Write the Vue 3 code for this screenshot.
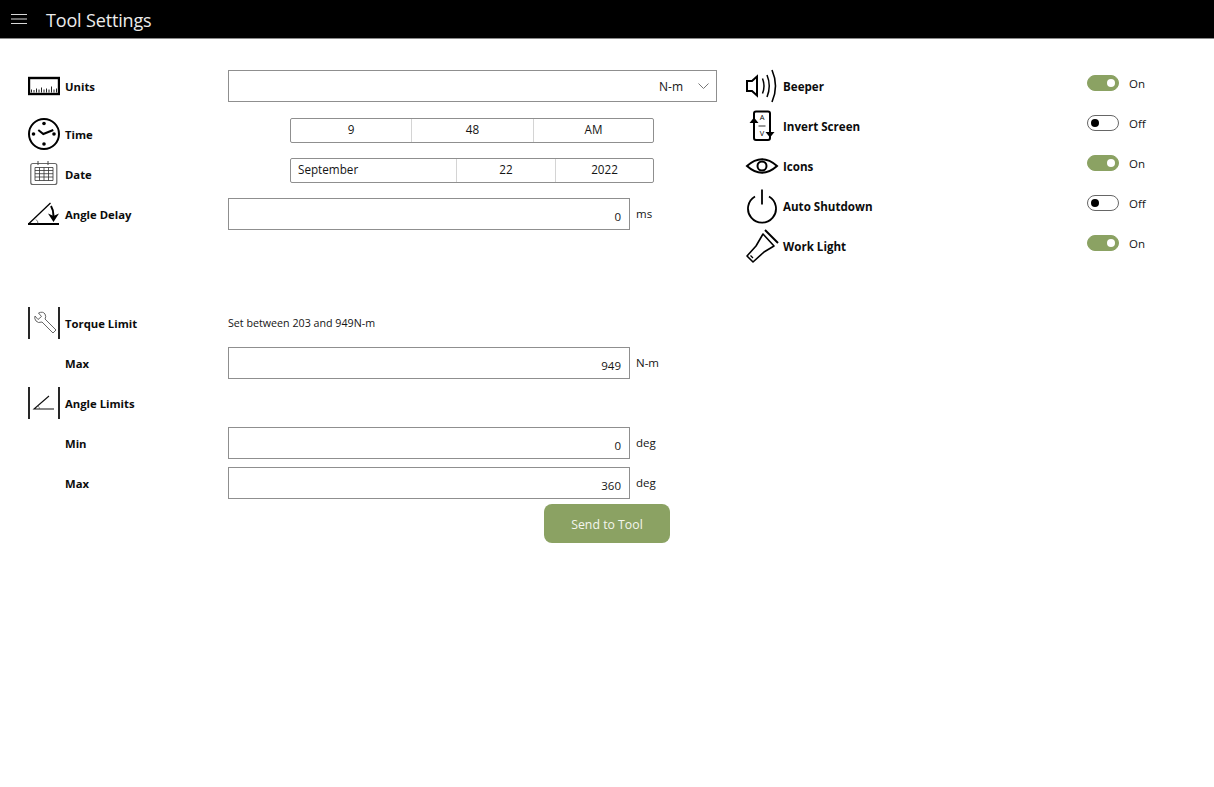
<script setup>
const toggles = [
  { name: 'Beeper', on: true, icon: 'beeper' },
  { name: 'Invert Screen', on: false, icon: 'invert' },
  { name: 'Icons', on: true, icon: 'eye' },
  { name: 'Auto Shutdown', on: false, icon: 'power' },
  { name: 'Work Light', on: true, icon: 'light' },
]
</script>

<template>
  <div class="page">
    <header class="bar">
      <svg class="burger" width="16" height="10" viewBox="0 0 16 10"><path d="M0 .5h16M0 5h16M0 9.5h16" stroke="#d8d8d8" fill="none" /></svg>
      <h1>Tool Settings</h1>
    </header>
    <main class="main">
      <section class="left">
        <div class="row mb4">
          <div class="label">
            <svg class="icon" width="32" height="32" viewBox="0 0 32 32">
              <rect x="1" y="8" width="30" height="16" fill="none" stroke="#000" stroke-width="2.400" />
              <path d="M3.500 22.500v-3M6 22.500v-2.500M8.500 22.500v-4M11 22.500v-3M13.500 22.500v-5M16 22.500v-3M18.500 22.500v-4M21 22.500v-3M23.500 22.500v-6M26 22.500v-3M28.500 22.500v-4" stroke="#222" stroke-width="1" />
            </svg>
            <span>Units</span>
          </div>
          <div class="box select"><span>N-m</span>
            <svg width="11" height="6" viewBox="0 0 11 6"><path d="M.5.5l5 5 5-5" fill="none" stroke="#777" /></svg>
          </div>
        </div>
        <div class="row">
          <div class="label low">
            <svg class="icon" width="32" height="32" viewBox="0 0 32 32">
              <circle cx="16" cy="16" r="15" fill="none" stroke="#000" stroke-width="2" />
              <circle cx="16" cy="5.500" r="1.800" /><circle cx="16" cy="26" r="1.800" /><circle cx="5.500" cy="16" r="1.800" /><circle cx="26" cy="16" r="1.800" />
              <path d="M10.300 12l5 4 10-4" fill="none" stroke="#000" stroke-width="2" />
            </svg>
            <span>Time</span>
          </div>
          <div class="seg seg-time"><div>9</div><div>48</div><div>AM</div></div>
        </div>
        <div class="row mb4">
          <div class="label low">
            <svg class="icon" width="32" height="32" viewBox="0 0 32 32">
              <rect x="2.800" y="5.500" width="26" height="21" rx="2" fill="none" stroke="#666" stroke-width="1.200" />
              <path d="M10 3v4M20 3v4" stroke="#444" />
              <path d="M7 9.500h18v13H7zM7 12.500h18M7 15.700h18M7 19h18M11.500 9.500v13M16 9.500v13M20.500 9.500v13" fill="none" stroke="#333" stroke-width=".8" />
            </svg>
            <span>Date</span>
          </div>
          <div class="seg seg-date"><div class="start">September</div><div>22</div><div>2022</div></div>
        </div>
        <div class="row gap-after">
          <div class="label">
            <svg class="icon" width="32" height="32" viewBox="0 0 32 32">
              <path d="M0 26h31" stroke="#000" stroke-width="2" />
              <path d="M1 25.500L22.500 5" stroke="#000" stroke-width="1.300" fill="none" />
              <path d="M8 21.500q2 1.500 2 4" fill="none" stroke="#333" stroke-width=".7" />
              <path d="M23 8q2.500 4 2.500 10" fill="none" stroke="#000" stroke-width="2" />
              <path d="M20 15.500l5.500 2.500 5.500-2.500L25.500 24z" />
            </svg>
            <span>Angle Delay</span>
          </div>
          <div class="box input">0</div><span class="unit">ms</span>
        </div>

        <div class="row">
          <div class="label">
            <svg class="icon" width="32" height="32" viewBox="0 0 32 32">
              <path d="M1 0v32M31 0v32" stroke="#111" stroke-width="1.800" />
              <path d="M7 9l3 3.500 3.500-3L10.500 6q4.500-2 6.500 1 1.500 3 0 5l11 11-3 3-11-11q-4 1.500-6-1-2-2.500-1-5z" fill="none" stroke="#555" stroke-width=".9" />
            </svg>
            <span>Torque Limit</span>
          </div>
          <span class="hint">Set between 203 and 949N-m</span>
        </div>
        <div class="row">
          <div class="label"><span class="indent">Max</span></div>
          <div class="box input">949</div><span class="unit">N-m</span>
        </div>
        <div class="row">
          <div class="label">
            <svg class="icon" width="32" height="32" viewBox="0 0 32 32">
              <path d="M1 0v32M31 0v32" stroke="#111" stroke-width="1.800" />
              <path d="M26 22H6l15-13" fill="none" stroke="#111" stroke-width="1.100" />
              <path d="M10 19q1.500 1 1.500 3" fill="none" stroke="#444" stroke-width=".6" />
            </svg>
            <span>Angle Limits</span>
          </div>
        </div>
        <div class="row">
          <div class="label"><span class="indent">Min</span></div>
          <div class="box input">0</div><span class="unit">deg</span>
        </div>
        <div class="row">
          <div class="label"><span class="indent">Max</span></div>
          <div class="box input">360</div><span class="unit">deg</span>
        </div>
        <div class="actions"><button class="send" type="button">Send to Tool</button></div>
      </section>

      <section class="right">
        <div v-for="t in toggles" :key="t.name" class="trow">
          <svg class="ricon" width="34" height="34" viewBox="0 0 34 34">
            <g v-if="t.icon === 'beeper'" fill="none" stroke="#000">
              <path d="M2 12h5l5-4.500v19L7 22H2z" stroke-width="2" />
              <path d="M17.500 9.500q3 7.500 0 15" stroke-width="1.500" />
              <path d="M22 6q4.500 11 0 22" stroke-width="1.500" />
              <path d="M27 1q7 16 0 32" stroke-width="1.600" />
            </g>
            <g v-else-if="t.icon === 'invert'">
              <path d="M9 10V4.500q0-2 2-2h12q2 0 2 2V25M9 14v15q0 2 2 2h12q2 0 2-2v-2" fill="none" stroke="#000" stroke-width="2" />
              <path d="M4.500 14L9 8.500l4.500 5.500zM20.500 23h9L25 28.500z" />
              <text x="17" y="11" class="tiny">A</text>
              <path d="M13.500 17h7" stroke="#333" stroke-width="1" />
              <text x="17" y="27" class="tiny">V</text>
            </g>
            <g v-else-if="t.icon === 'eye'" fill="none" stroke="#000">
              <path d="M2 17Q17 3.500 32 17 17 30.500 2 17z" stroke-width="2" />
              <circle cx="17" cy="17" r="4.500" stroke-width="2" />
            </g>
            <g v-else-if="t.icon === 'power'" fill="none" stroke="#000" stroke-width="1.800">
              <path d="M10 7.500a14 14 0 1 0 14 0" />
              <path d="M17 .5v15" />
            </g>
            <g v-else fill="none" stroke="#000">
              <path d="M20 1l13 13" stroke-width="2" />
              <path d="M18 5l11 12-10 6L8 33l-6-6 9-10z" stroke-width="1.600" stroke-linejoin="round" />
              <path d="M5.500 26.500l2.500 2.500" stroke-width="1.200" />
            </g>
          </svg>
          <span class="tname">{{ t.name }}</span>
          <div class="toggle-wrap">
            <span class="switch" :class="{ on: t.on }"><i></i></span>
            <span class="state">{{ t.on ? 'On' : 'Off' }}</span>
          </div>
        </div>
      </section>
    </main>
  </div>
</template>

<style>
html, body { margin: 0; background: #fff; }
</style>

<style scoped>
.page {
  width: 1214px;
  height: 787px;
  background: #fff;
  color: #151515;
  font-family: "Open Sans", "Noto Sans", "Liberation Sans", sans-serif;
  font-size: 11.500px;
  overflow: hidden;
}
.bar {
  height: 38px;
  background: #000;
  border-bottom: 1px solid #8a8a8a;
  box-sizing: content-box;
  display: flex;
  align-items: center;
  color: #ececec;
}
.burger { margin-left: 11px; margin-right: 19px; }
h1 { margin: 2px 0 0; font-size: 18px; font-weight: 400; letter-spacing: -.16px; }
.main {
  display: flex;
  padding: 27px 0 0 28px;
}
.left { width: 689px; flex: none; }
.right { margin-left: 28px; width: 469px; }
.row { display: flex; align-items: center; height: 40px; }
.mb4 { margin-bottom: 4px; }
.gap-after { margin-bottom: 69px; }
.label {
  width: 200px;
  flex: none;
  display: flex;
  align-items: center;
  gap: 5px;
  font-weight: 700;
  font-size: 11.300px;
  color: #0c0c0c;
}
.low { padding-top: 8px; height: 40px; box-sizing: border-box; }
.icon { flex: none; }
.indent { margin-left: 37px; }
.box {
  box-sizing: border-box;
  height: 32px;
  border: 1px solid #8f8f8f;
  background: #fff;
  display: flex;
  align-items: center;
}
.select { width: 489px; justify-content: flex-end; gap: 15px; padding-right: 7px; font-size: 12px; }
.input { width: 402px; justify-content: flex-end; padding: 5px 8px 0 0; }
.unit { margin-left: 6px; margin-top: -2px; }
.hint { font-size: 10.700px; margin-top: -1px; }
.seg {
  box-sizing: border-box;
  margin-left: 62px;
  width: 364px;
  height: 25px;
  display: grid;
  border: 1px solid #8f8f8f;
  border-radius: 2px;
  font-size: 11.700px;
}
.seg > div {
  display: flex;
  align-items: center;
  justify-content: center;
  border-left: 1px solid #d4d4d4;
  padding-bottom: 2px;
}
.seg > div:first-child { border-left: 0; }
.seg-time { grid-template-columns: 120px 122px 1fr; }
.seg-date { grid-template-columns: 165px 99px 1fr; }
.seg .start { justify-content: flex-start; padding-left: 7px; }
.actions { display: flex; justify-content: flex-end; padding-right: 47px; margin-top: 1px; }
.send {
  width: 126px;
  height: 39px;
  border: 0;
  border-radius: 8px;
  background: #8ba263;
  color: #f4f6ee;
  font: inherit;
  font-size: 12.300px;
  padding: 2px 0 0;
}
.trow { display: flex; align-items: center; height: 40px; }
.ricon { flex: none; overflow: visible; }
.tname { margin-left: 4px; font-weight: 700; font-size: 11.600px; color: #0c0c0c; }
.toggle-wrap {
  margin-left: auto;
  margin-right: 69px;
  margin-bottom: 6px;
  display: flex;
  align-items: center;
  width: 58px;
}
.switch {
  box-sizing: border-box;
  width: 32px;
  height: 16px;
  flex: none;
  border: 1px solid #666;
  border-radius: 8px;
  display: flex;
  align-items: center;
  padding: 0 3px;
  background: #fff;
}
.switch i { width: 8px; height: 8px; border-radius: 50%; background: #000; }
.switch.on { background: #8ba263; border-color: #8ba263; justify-content: flex-end; }
.switch.on i { background: #fff; }
.state { margin-left: 10px; }
.tiny { font-size: 7.500px; text-anchor: middle; font-family: "Open Sans", sans-serif; }
</style>
